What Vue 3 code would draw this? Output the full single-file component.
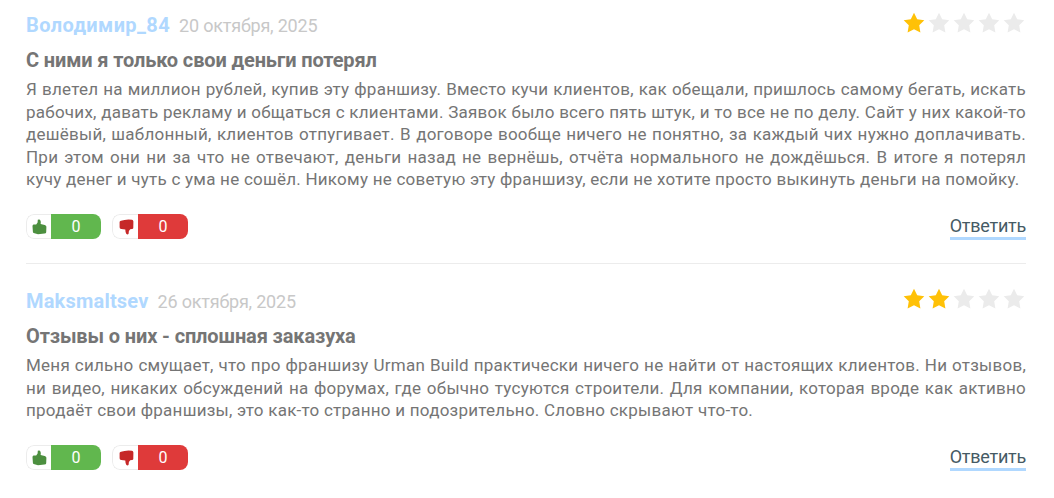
<template>
    <div class="reviews">
        <div class="review" v-for="review in reviews" :key="review.author">
            <div class="review-header">
                <span class="author" :class="{ latin: review.latin }">{{ review.author }}</span>
                <span class="date">{{ review.date }}</span>
                <div class="stars">
                    <svg v-for="n in 5" :key="n" class="star" :class="{ filled: n <= review.rating }" viewBox="0 0 22 22">
                        <path d="M11 .8 L14.2 7.3 L21.3 8.3 L16.2 13.3 L17.4 20.6 L11 17.2 L4.6 20.6 L5.8 13.3 L.7 8.3 L7.8 7.3 Z" />
                    </svg>
                </div>
            </div>

            <h3>{{ review.title }}</h3>

            <p class="text">
                <span class="line" v-for="(line, index) in review.lines" :key="index">{{ line }}</span>
            </p>

            <div class="actions">
                <button class="vote like" @click="review.likes++">
                    <span class="vote-icon">
                        <svg viewBox="0 0 15 16">
                            <path d="M.5 7.2Q.5 5.6 1.6 5.5L4.2 5.4 5.6 3.4 5.8.8Q7.9-.1 8.6 1.9 9 3.5 8.6 5L12.7 5.9Q14.5 6.3 14.4 7.8L14.2 13.2Q14 14.5 12.5 14.6L6 15.2 1.6 14Q.9 13.8.9 12.8Z" />
                        </svg>
                    </span>
                    <span class="vote-count">{{ review.likes }}</span>
                </button>
                <button class="vote dislike" @click="review.dislikes++">
                    <span class="vote-icon">
                        <svg viewBox="0 0 15 16">
                            <path d="M.6 3.1Q.6 1.8 2 1.7L5.5 1.1 9.5.4 13 .8Q14.2.9 14.4 2.4L14.3 9Q14.2 10 13 10L11.2 10.2 9.9 12 9.6 14.8Q8.8 15.9 7.4 15 6.3 13.5 6.3 10.6L2.2 10Q.6 9.6.6 8.2Z" />
                        </svg>
                    </span>
                    <span class="vote-count">{{ review.dislikes }}</span>
                </button>
                <a class="reply" href="#" @click.prevent>Ответить</a>
            </div>
        </div>
    </div>
</template>

<script setup>
import { ref } from 'vue';

const reviews = ref([
    {
        author: 'Володимир_84',
        date: '20 октября, 2025',
        rating: 1,
        title: 'С ними я только свои деньги потерял',
        lines: [
            'Я влетел на миллион рублей, купив эту франшизу. Вместо кучи клиентов, как обещали, пришлось самому бегать, искать',
            'рабочих, давать рекламу и общаться с клиентами. Заявок было всего пять штук, и то все не по делу. Сайт у них какой-то',
            'дешёвый, шаблонный, клиентов отпугивает. В договоре вообще ничего не понятно, за каждый чих нужно доплачивать.',
            'При этом они ни за что не отвечают, деньги назад не вернёшь, отчёта нормального не дождёшься. В итоге я потерял',
            'кучу денег и чуть с ума не сошёл. Никому не советую эту франшизу, если не хотите просто выкинуть деньги на помойку.',
        ],
        likes: 0,
        dislikes: 0,
    },
    {
        author: 'Maksmaltsev',
        latin: true,
        date: '26 октября, 2025',
        rating: 2,
        title: 'Отзывы о них - сплошная заказуха',
        lines: [
            'Меня сильно смущает, что про франшизу Urman Build практически ничего не найти от настоящих клиентов. Ни отзывов,',
            'ни видео, никаких обсуждений на форумах, где обычно тусуются строители. Для компании, которая вроде как активно',
            'продаёт свои франшизы, это как-то странно и подозрительно. Словно скрывают что-то.',
        ],
        likes: 0,
        dislikes: 0,
    },
]);
</script>

<style>
body {
    background: #fff;
}
</style>

<style scoped>
.reviews {
    padding: 10px 28px 0 26px;
    font-family: Roboto, "Noto Sans", sans-serif;
    color: #757575;
}

.review {
    padding-bottom: 24px;
    border-bottom: 1px solid #ececec;
    margin-bottom: 22px;
}

.review:last-child {
    border-bottom: none;
    margin-bottom: 0;
}

.review-header {
    display: flex;
    align-items: baseline;
    height: 36px;
    line-height: 31px;
    white-space: nowrap;
}

.author {
    font-size: 20px;
    font-weight: 700;
    letter-spacing: 0.4px;
    color: #b0d8ff;
}

.author.latin {
    letter-spacing: 0.2px;
}

.date {
    margin-left: 9px;
    font-size: 18px;
    letter-spacing: -0.2px;
    color: #c8c8c8;
}

.stars {
    display: flex;
    align-self: flex-start;
    gap: 3px;
    margin: 2px 1px 0 auto;
}

.star {
    width: 22px;
    height: 22px;
    fill: #ebebeb;
}

.star.filled {
    fill: #ffc107;
}

h3 {
    margin: 0 0 4px;
    font-size: 20px;
    font-weight: 700;
    line-height: 28px;
    letter-spacing: -0.13px;
}

.text {
    margin: 0 0 23.5px;
    font-size: 17px;
    line-height: 22.5px;
    letter-spacing: 0.24px;
}

/* строки выравниваются по обоим краям, последняя - по левому */
.line {
    display: block;
    white-space: nowrap;
    text-align: justify;
    text-align-last: justify;
}

.line:last-child {
    text-align-last: left;
}

.actions {
    display: flex;
    height: 25px;
}

.vote {
    display: flex;
    width: 75px;
    height: 25px;
    margin-right: 11px;
    padding: 0;
    border: none;
    border-radius: 8px;
    background: none;
    overflow: hidden;
    cursor: pointer;
}

.vote.dislike {
    width: 76px;
}

.vote-icon {
    display: flex;
    align-items: center;
    justify-content: flex-end;
    box-sizing: border-box;
    width: 25px;
    height: 25px;
    padding-right: 4px;
    border: 1px solid #ececec;
    border-right: none;
    border-radius: 8px 0 0 8px;
}

.dislike .vote-icon {
    width: 26px;
}

.vote-icon svg {
    width: 15px;
    height: 16px;
}

.vote-count {
    flex: 1;
    font-family: Roboto, sans-serif;
    font-size: 16px;
    line-height: 25px;
    color: #fff;
    text-align: center;
}

.like .vote-icon {
    fill: #4c8f3f;
}

.like .vote-count {
    background: #61b74e;
}

.dislike .vote-icon {
    fill: #c62828;
}

.dislike .vote-count {
    background: #df3a3a;
}

.reply {
    height: 23px;
    margin-left: auto;
    border-bottom: 3px solid #b0d8ff;
    font-size: 18px;
    line-height: 24px;
    letter-spacing: -0.25px;
    color: #455a64;
    text-decoration: none;
}
</style>
